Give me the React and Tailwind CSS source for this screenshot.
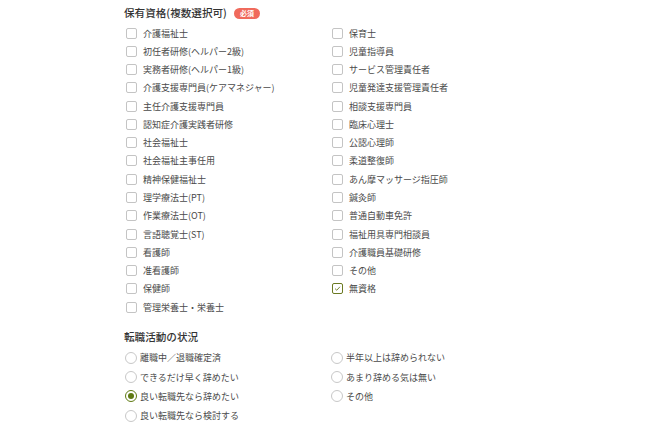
import React, { useState } from 'react';

const leftQuals = [
  '介護福祉士',
  '初任者研修(ヘルパー2級)',
  '実務者研修(ヘルパー1級)',
  '介護支援専門員(ケアマネジャー)',
  '主任介護支援専門員',
  '認知症介護実践者研修',
  '社会福祉士',
  '社会福祉主事任用',
  '精神保健福祉士',
  '理学療法士(PT)',
  '作業療法士(OT)',
  '言語聴覚士(ST)',
  '看護師',
  '准看護師',
  '保健師',
  '管理栄養士・栄養士',
];

const rightQuals = [
  '保育士',
  '児童指導員',
  'サービス管理責任者',
  '児童発達支援管理責任者',
  '相談支援専門員',
  '臨床心理士',
  '公認心理師',
  '柔道整復師',
  'あん摩マッサージ指圧師',
  '鍼灸師',
  '普通自動車免許',
  '福祉用具専門相談員',
  '介護職員基礎研修',
  'その他',
  '無資格',
];

const leftStatus = ['離職中／退職確定済', 'できるだけ早く辞めたい', '良い転職先なら辞めたい', '良い転職先なら検討する'];
const rightStatus = ['半年以上は辞められない', 'あまり辞める気は無い', 'その他'];

function Check({ label, checked, onToggle }) {
  return (
    <label className="flex h-[18.27px] items-center gap-[6px] cursor-pointer" onClick={onToggle}>
      <span
        className={
          'flex h-[11px] w-[11px] shrink-0 items-center justify-center rounded-[2px] border bg-white ' +
          (checked ? 'border-[#6b7a22]' : 'border-[#c4c4c4]')
        }
      >
        {checked && (
          <svg viewBox="0 0 10 10" className="h-[7px] w-[7px]">
            <path d="M1.5 5.2 L4 7.5 L8.5 2.5" fill="none" stroke="#6b7a22" strokeWidth="1.3" />
          </svg>
        )}
      </span>
      <span className="text-[9px] leading-none text-[#4a4a4a]">{label}</span>
    </label>
  );
}

function Radio({ label, checked, onPick }) {
  return (
    <label className="flex h-[19.3px] items-center gap-[3px] cursor-pointer" onClick={onPick}>
      <span
        className={
          'flex h-[12px] w-[12px] shrink-0 items-center justify-center rounded-full bg-white ' +
          (checked ? 'border-[1.5px] border-[#5f7a12]' : 'border border-[#c8c8c8]')
        }
      >
        {checked && <span className="h-[6px] w-[6px] rounded-full bg-[#5f7a12]" />}
      </span>
      <span className="text-[9px] leading-none text-[#4a4a4a]">{label}</span>
    </label>
  );
}

export default function App() {
  const [quals, setQuals] = useState(['無資格']);
  const [status, setStatus] = useState('良い転職先なら辞めたい');

  const toggle = (q) =>
    setQuals((prev) => (prev.includes(q) ? prev.filter((x) => x !== q) : [...prev, q]));

  return (
    <div
      className="min-h-[426px] w-[650px] bg-white pt-[5px]"
      style={{ fontFamily: '"Noto Sans CJK JP", "Noto Sans", sans-serif' }}
    >
      <div className="ml-[124px] w-[416px]">
        <div className="flex h-[16px] items-center gap-[7px]">
          <h2 className="text-[10.6px] font-medium leading-none text-[#333]">保有資格(複数選択可)</h2>
          <span className="flex h-[11px] items-center rounded-full bg-[#f06a5c] px-[6px] text-[7px] font-bold leading-none text-white">
            必須
          </span>
        </div>

        <div className="mt-[3px] flex pl-[2px]">
          <div className="flex w-[206px] flex-col">
            {leftQuals.map((q) => (
              <Check key={q} label={q} checked={quals.includes(q)} onToggle={() => toggle(q)} />
            ))}
          </div>
          <div className="flex flex-col">
            {rightQuals.map((q) => (
              <Check key={q} label={q} checked={quals.includes(q)} onToggle={() => toggle(q)} />
            ))}
          </div>
        </div>

        <div className="mt-[13px] flex h-[16px] items-center">
          <h2 className="text-[10.6px] font-medium leading-none text-[#333]">転職活動の状況</h2>
        </div>

        <div className="mt-[3px] flex pl-[1px]">
          <div className="flex w-[206px] flex-col">
            {leftStatus.map((s) => (
              <Radio key={s} label={s} checked={status === s} onPick={() => setStatus(s)} />
            ))}
          </div>
          <div className="flex flex-col">
            {rightStatus.map((s) => (
              <Radio key={s} label={s} checked={status === s} onPick={() => setStatus(s)} />
            ))}
          </div>
        </div>
      </div>
    </div>
  );
}
